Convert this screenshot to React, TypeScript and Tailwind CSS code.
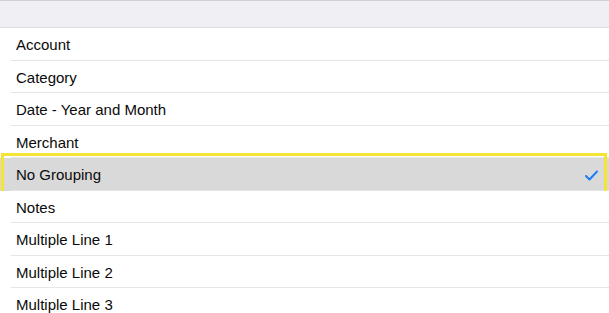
const items = [
  "Account",
  "Category",
  "Date - Year and Month",
  "Merchant",
  "No Grouping",
  "Notes",
  "Multiple Line 1",
  "Multiple Line 2",
  "Multiple Line 3",
];

const selected = "No Grouping";

function Check() {
  return (
    <svg width="13" height="11" viewBox="0 0 13 11" className="shrink-0">
      <polyline
        points="1,6 4.5,9.5 12,1.5"
        fill="none"
        stroke="#1a7cf5"
        strokeWidth="1.9"
        strokeLinecap="round"
        strokeLinejoin="round"
      />
    </svg>
  );
}

export default function App() {
  return (
    <div className="w-[609px] h-[313px] overflow-hidden bg-white font-['Liberation_Sans',Arial,sans-serif] text-[15px] text-[#0a0a0a]">
      <div className="h-[28px] bg-[#efeff4] border-t border-[#cfcfd4] border-b border-b-[#dedee2]" />
      <ul>
        {items.map((label) => {
          const isSel = label === selected;
          return (
            <li key={label} className={`relative h-[32.5px] ${isSel ? "bg-[#d9d9d9]" : "bg-white"}`}>
              <div className="flex h-full items-center justify-between pl-4 pr-[11px] pt-[2px]">
                <span>{label}</span>
                {isSel && <Check />}
              </div>
              <div className="absolute bottom-0 left-[11px] right-0 h-px bg-[#e6e6e8]" />
              {isSel && (
                <div className="pointer-events-none absolute left-[1px] right-[2px] top-[-5px] bottom-[-4px] border-[3px] border-[#f5e436]" />
              )}
            </li>
          );
        })}
      </ul>
    </div>
  );
}
